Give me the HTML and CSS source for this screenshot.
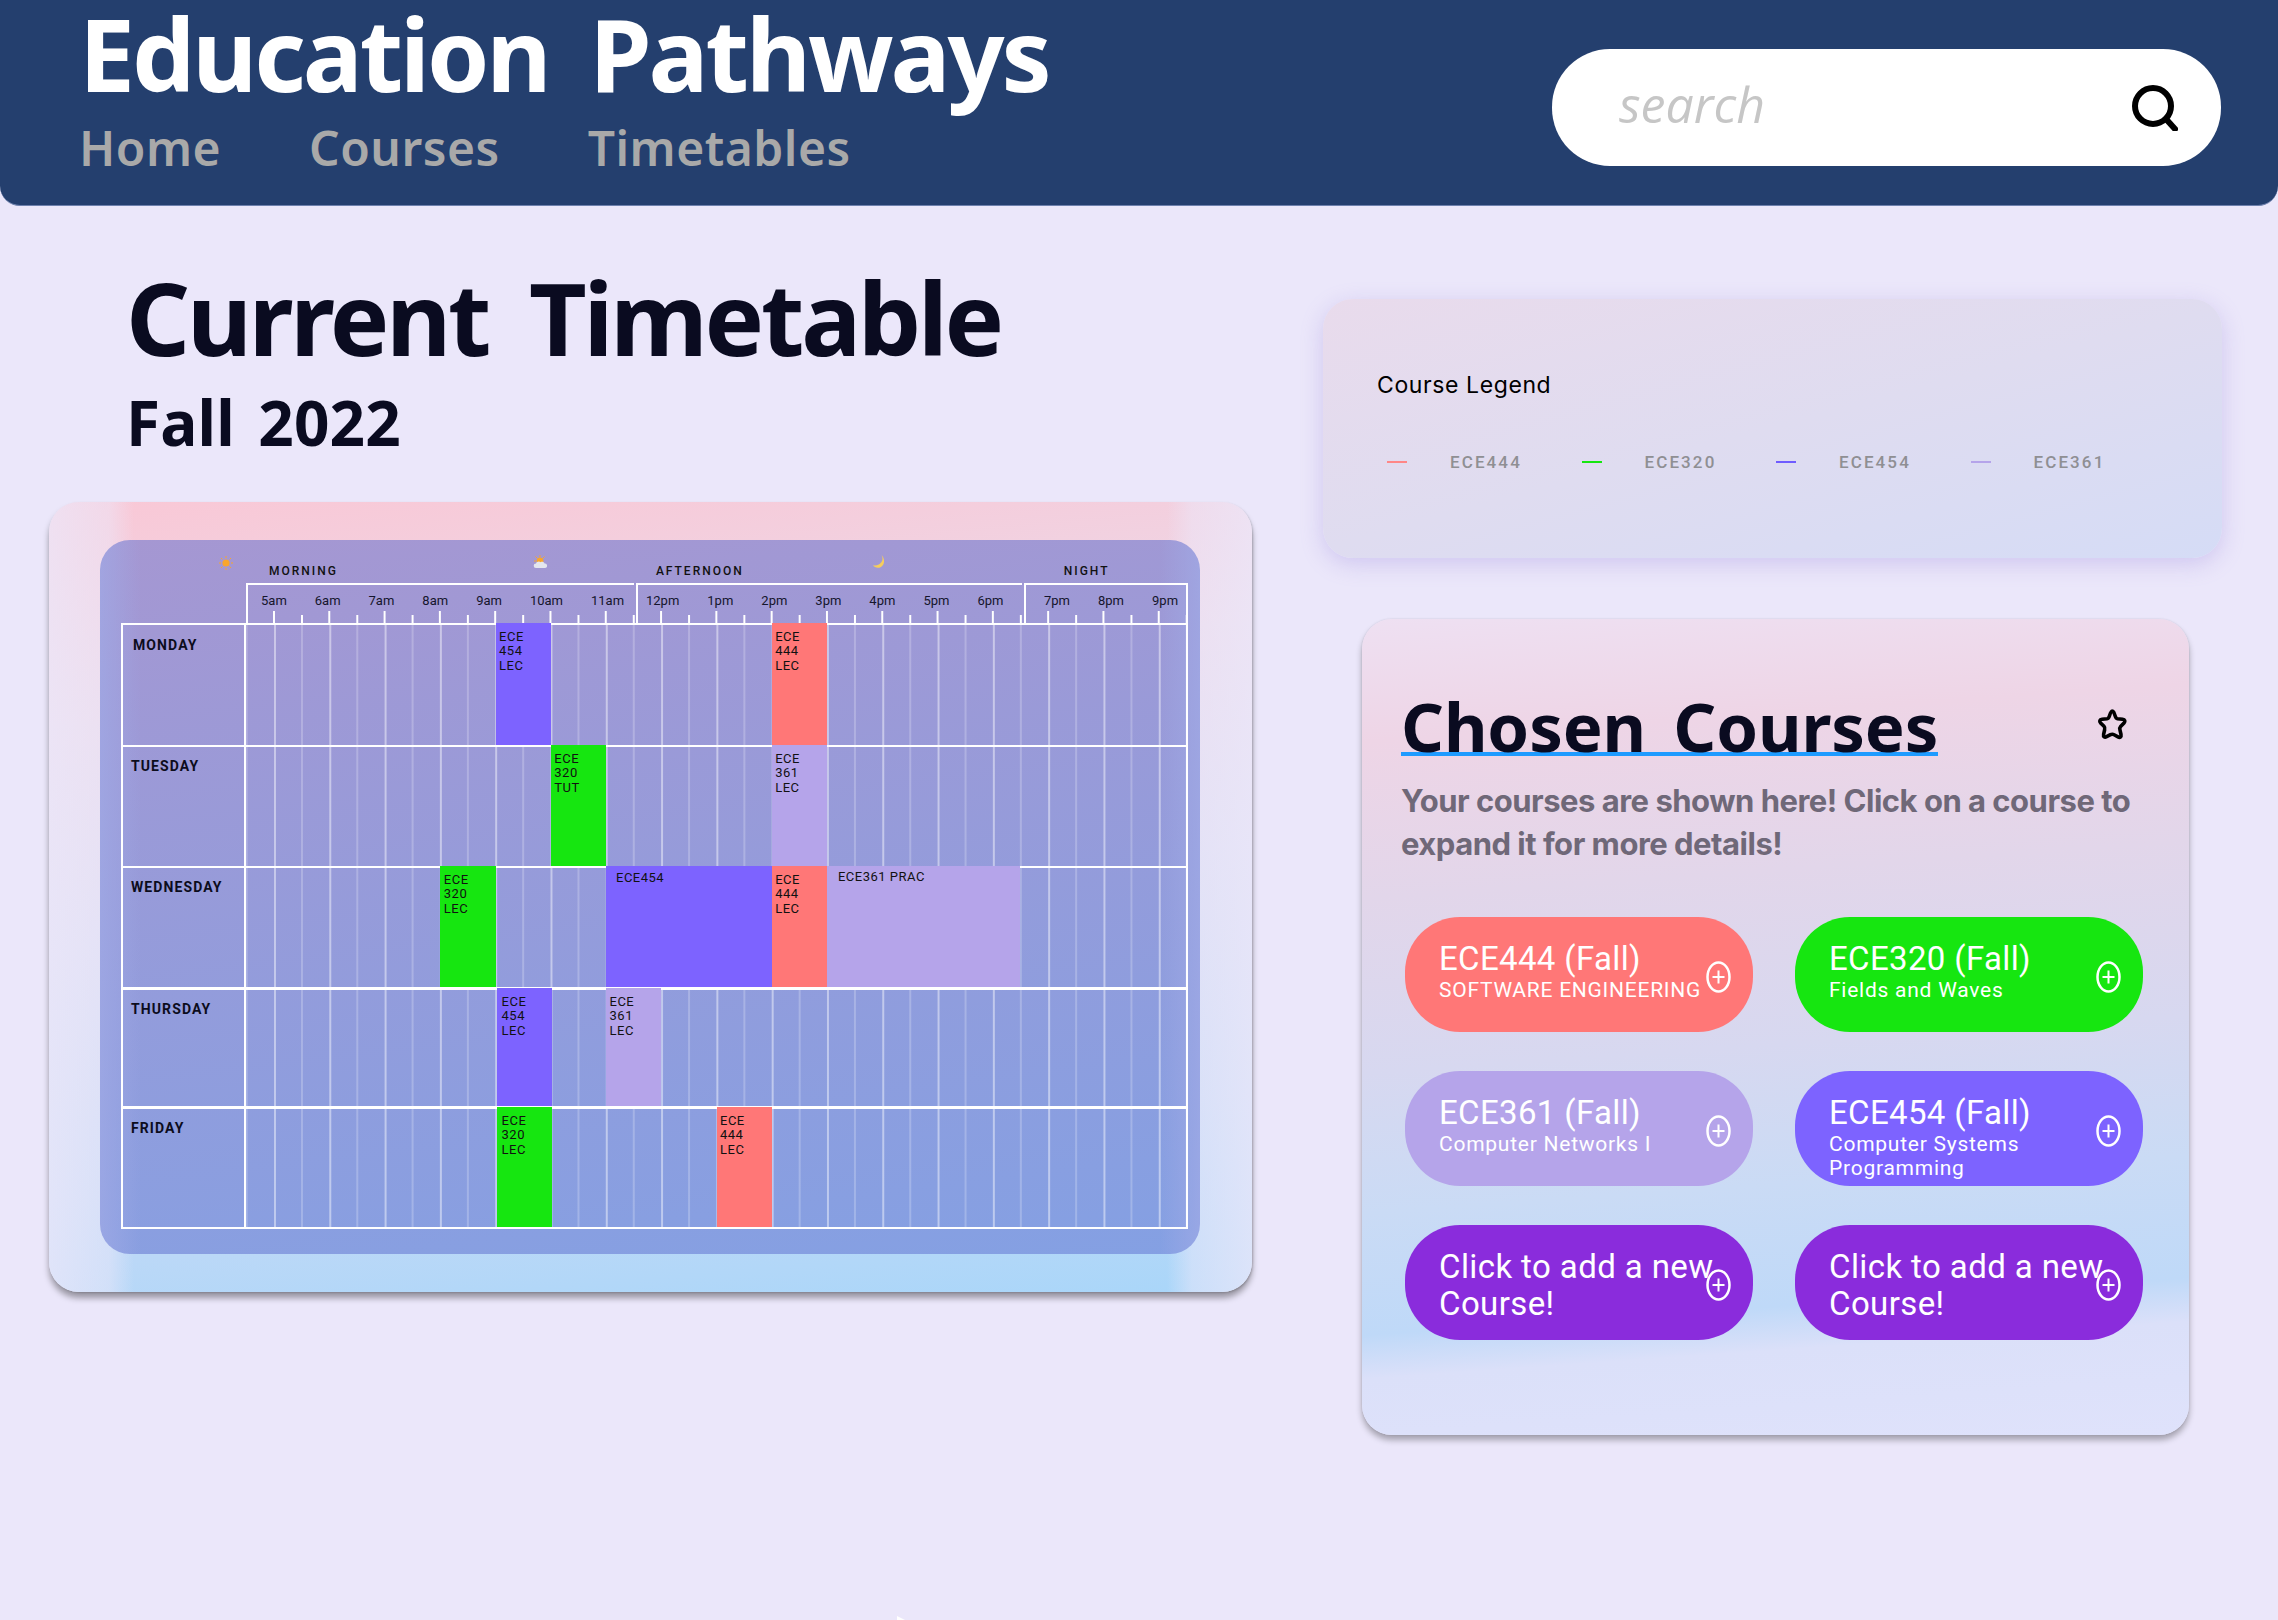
FILE: index.html
```html
<!DOCTYPE html>
<html lang="en">
<head>
  <meta charset="UTF-8">
  <title>Education Pathways</title>
  <link rel="stylesheet" href="styles.css">
</head>
<body>
  <header class="topbar">
    <div class="brand">
      <div class="app-name">Education Pathways</div>
      <nav class="nav">
        <a>Home</a>
        <a>Courses</a>
        <a>Timetables</a>
      </nav>
    </div>
    <div class="search">
      <span class="search-text">search</span>
      <svg class="search-icon" viewBox="0 0 46 46"><circle cx="21" cy="21" r="18" fill="none" stroke="#000" stroke-width="6"/><path d="M34 34l9 10" stroke="#000" stroke-width="6" stroke-linecap="round"/></svg>
    </div>
  </header>

  <main class="content">
    <section class="left">
      <h1 class="page-title">Current Timetable</h1>
      <h2 class="term">Fall 2022</h2>

      <div class="tt-card">
        <div class="tt-inner">
          <div class="periods">
            <svg class="p-icon sun" viewBox="0 0 14 14"><circle cx="7" cy="7" r="3.6" fill="#f9a62b"/><path d="M7 0v2M7 12v2M0 7h2M12 7h2M2 2l1.4 1.4M10.6 10.6L12 12M2 12l1.4-1.4M10.6 3.4L12 2" stroke="#f9a62b" stroke-width="1"/></svg>
            <span class="p-label morning">MORNING</span>
            <svg class="p-icon cloud" viewBox="0 0 16 14"><circle cx="7" cy="6" r="3.4" fill="#f9a62b"/><path d="M7 0v2M1 6h2M2.5 1.5l1.5 1.5M11.5 1.5L10 3" stroke="#f9a62b" stroke-width="1"/><path d="M3 13a2.3 2.3 0 0 1 0-4.6c.6-1.6 3-2.4 4.6-1.2 1.2-.8 3.6-.4 4 1.4a2.2 2.2 0 0 1 .6 4.4z" fill="#e4e6ee"/></svg>
            <span class="p-label afternoon">AFTERNOON</span>
            <svg class="p-icon moon" viewBox="0 0 14 14"><path d="M9.5 0c2.5 4 .5 10-6.500 10.500L1 10.300c1.500 2.700 7 4 10-.3 2-3 1-7.500-1.500-10z" fill="#f6cd5c"/></svg>
            <span class="p-label night">NIGHT</span>
          </div>

          <div class="hours-row">
            <div class="corner"></div>
            <div class="hours">
              <div class="hour-box am"><span>5am</span><span>6am</span><span>7am</span><span>8am</span><span>9am</span><span>10am</span><span>11am</span></div>
              <div class="hour-box pm"><span>12pm</span><span>1pm</span><span>2pm</span><span>3pm</span><span>4pm</span><span>5pm</span><span>6pm</span></div>
              <div class="hour-box eve"><span>7pm</span><span>8pm</span><span>9pm</span></div>
            </div>
          </div>

          <div class="week">
            <div class="day-row">
              <div class="day monday">MONDAY</div>
              <div class="slots">
                <div class="block c454 at-9">ECE<br>454<br>LEC</div>
                <div class="block c444 at-19">ECE<br>444<br>LEC</div>
              </div>
            </div>
            <div class="day-row">
              <div class="day">TUESDAY</div>
              <div class="slots">
                <div class="block c320 at-11">ECE<br>320<br>TUT</div>
                <div class="block c361 at-19">ECE<br>361<br>LEC</div>
              </div>
            </div>
            <div class="day-row">
              <div class="day">WEDNESDAY</div>
              <div class="slots">
                <div class="block c320 at-7">ECE<br>320<br>LEC</div>
                <div class="block c454 wide-a">ECE454</div>
                <div class="block c444 at-19">ECE<br>444<br>LEC</div>
                <div class="block c361 wide-b">ECE361 PRAC</div>
              </div>
            </div>
            <div class="day-row thick">
              <div class="day">THURSDAY</div>
              <div class="slots">
                <div class="block c454 at-9 nudge">ECE<br>454<br>LEC</div>
                <div class="block c361 at-13">ECE<br>361<br>LEC</div>
              </div>
            </div>
            <div class="day-row thick last">
              <div class="day">FRIDAY</div>
              <div class="slots">
                <div class="block c320 at-9 nudge">ECE<br>320<br>LEC</div>
                <div class="block c444 at-17">ECE<br>444<br>LEC</div>
              </div>
            </div>
          </div>
        </div>
      </div>
    </section>

    <aside class="right">
      <div class="legend-card">
        <div class="legend-title">Course Legend</div>
        <div class="legend-list">
          <div class="legend-item"><i class="swatch s444"></i>ECE444</div>
          <div class="legend-item"><i class="swatch s320"></i>ECE320</div>
          <div class="legend-item"><i class="swatch s454"></i>ECE454</div>
          <div class="legend-item"><i class="swatch s361"></i>ECE361</div>
        </div>
      </div>

      <div class="chosen-card">
        <div class="chosen-head">
          <h2 class="chosen-title">Chosen Courses</h2>
          <svg class="star" viewBox="0 0 32 32"><path d="M16 3c1.500 0 2 1.500 3 4.500.6 2 1.200 3 2.500 3.200l5 .6c2.500.4 3 2 1.500 3.700l-3.400 3.500c-1 1-1 2-.6 3.700l1 4.300c.5 2.500-1 3.500-3 2.400l-3.900-2.200c-1.300-.7-2.300-.7-3.600 0L10.600 28.700c-2 1.100-3.500.1-3-2.400l1-4.300c.4-1.700.4-2.700-.6-3.700L4.600 15c-1.500-1.700-1-3.300 1.500-3.700l5-.6c1.300-.2 1.900-1.200 2.500-3.200.9-3 1.400-4.500 2.900-4.500z" fill="none" stroke="#000" stroke-width="3.600"/></svg>
        </div>
        <p class="chosen-sub">Your courses are shown here! Click on a course to expand it for more details!</p>
        <div class="pills">
          <div class="pill c444">
            <div class="pill-name">ECE444 (Fall)</div>
            <div class="pill-sub">SOFTWARE ENGINEERING</div>
            <svg class="plus" viewBox="0 0 25 32"><ellipse cx="12.500" cy="16" rx="11" ry="14.500" fill="none" stroke="#fff" stroke-width="2.500"/><path d="M12.500 9.500v13M6.500 16h12" stroke="#fff" stroke-width="2"/></svg>
          </div>
          <div class="pill c320">
            <div class="pill-name">ECE320 (Fall)</div>
            <div class="pill-sub">Fields and Waves</div>
            <svg class="plus" viewBox="0 0 25 32"><ellipse cx="12.500" cy="16" rx="11" ry="14.500" fill="none" stroke="#fff" stroke-width="2.500"/><path d="M12.500 9.500v13M6.500 16h12" stroke="#fff" stroke-width="2"/></svg>
          </div>
          <div class="pill c361">
            <div class="pill-name">ECE361 (Fall)</div>
            <div class="pill-sub">Computer Networks I</div>
            <svg class="plus" viewBox="0 0 25 32"><ellipse cx="12.500" cy="16" rx="11" ry="14.500" fill="none" stroke="#fff" stroke-width="2.500"/><path d="M12.500 9.500v13M6.500 16h12" stroke="#fff" stroke-width="2"/></svg>
          </div>
          <div class="pill c454">
            <div class="pill-name">ECE454 (Fall)</div>
            <div class="pill-sub">Computer Systems<br>Programming</div>
            <svg class="plus" viewBox="0 0 25 32"><ellipse cx="12.500" cy="16" rx="11" ry="14.500" fill="none" stroke="#fff" stroke-width="2.500"/><path d="M12.500 9.500v13M6.500 16h12" stroke="#fff" stroke-width="2"/></svg>
          </div>
          <div class="pill add">
            <div class="pill-add">Click to add a new<br>Course!</div>
            <svg class="plus" viewBox="0 0 25 32"><ellipse cx="12.500" cy="16" rx="11" ry="14.500" fill="none" stroke="#fff" stroke-width="2.500"/><path d="M12.500 9.500v13M6.500 16h12" stroke="#fff" stroke-width="2"/></svg>
          </div>
          <div class="pill add">
            <div class="pill-add">Click to add a new<br>Course!</div>
            <svg class="plus" viewBox="0 0 25 32"><ellipse cx="12.500" cy="16" rx="11" ry="14.500" fill="none" stroke="#fff" stroke-width="2.500"/><path d="M12.500 9.500v13M6.500 16h12" stroke="#fff" stroke-width="2"/></svg>
          </div>
        </div>
      </div>
    </aside>
  </main>
  <svg class="cursor-tip" viewBox="0 0 8 4"><path d="M0 0l8 4H0z" fill="#fff"/></svg>
</body>
</html>
```

FILE: styles.css
```css
body {
  position: relative;
  margin: 0;
  height: 1620px;
  overflow: hidden;
  background: #ebe7fa;
  font-family: "Roboto", sans-serif;
}
h1, h2, p {
  margin: 0;
}
.cursor-tip {
  position: absolute;
  left: 897px;
  bottom: 0;
  width: 8px;
  height: 4px;
}

/* top bar */
.topbar {
  height: 206px;
  box-sizing: border-box;
  background: #243f6e;
  border-radius: 0 0 20px 20px;
  border-bottom: 1px solid #6d80ad;
  display: flex;
  justify-content: space-between;
  padding: 3px 57px 0 79px;
}
.app-name {
  font-family: "Noto Sans", sans-serif;
  font-size: 100px;
  font-weight: 700;
  line-height: 100px;
  letter-spacing: -3px;
  word-spacing: 18px;
  color: #fff;
}
.nav {
  display: flex;
  gap: 88px;
  margin-top: 17px;
}
.nav a {
  font-family: "Noto Sans", sans-serif;
  font-size: 48px;
  font-weight: 600;
  line-height: 56px;
  letter-spacing: 0.500px;
  color: #a9a9a9;
}
.search {
  width: 669px;
  height: 117px;
  margin-top: 46px;
  box-sizing: border-box;
  background: #fff;
  border-radius: 58px;
  display: flex;
  align-items: center;
  justify-content: space-between;
  padding: 0 43px 0 67px;
}
.search-text {
  font-family: "Open Sans", sans-serif;
  font-style: italic;
  font-size: 50px;
  color: #c6c6c6;
  margin-top: -8px;
}
.search-icon {
  width: 46px;
  height: 46px;
}

.content {
  display: flex;
}

/* left column */
.left {
  width: 1203px;
  margin-left: 49px;
}
.page-title {
  font-family: "Noto Sans", sans-serif;
  font-size: 100px;
  font-weight: 700;
  line-height: 100px;
  letter-spacing: -3.200px;
  word-spacing: 18px;
  color: #0a0b20;
  margin: 61px 0 0 77px;
}
.term {
  font-family: "Noto Sans", sans-serif;
  font-size: 62px;
  font-weight: 700;
  line-height: 70px;
  letter-spacing: 0.200px;
  word-spacing: 7px;
  color: #0a0b20;
  margin: 20px 0 0 77px;
}
.tt-card {
  margin-top: 45px;
  height: 790px;
  box-sizing: border-box;
  padding: 38px 52px 38px 51px;
  border-radius: 30px;
  background:
    linear-gradient(90deg, rgba(236, 232, 250, 0.75), rgba(236, 232, 250, 0.5) 60px, rgba(236, 232, 250, 0) 85px, rgba(236, 232, 250, 0) calc(100% - 85px), rgba(236, 232, 250, 0.5) calc(100% - 60px), rgba(236, 232, 250, 0.75)),
    linear-gradient(175deg, #f9c8d6 0%, #ecd8e8 25%, #dcdcf2 50%, #c4d9f6 78%, #a9d6f9 100%);
  box-shadow: 0 6px 6px rgba(0, 0, 0, 0.35), 1px 1px 2px rgba(0, 0, 0, 0.15);
}
.tt-inner {
  height: 100%;
  box-sizing: border-box;
  padding: 0 12px 0 21px;
  border-radius: 30px;
  background:
    linear-gradient(90deg, rgba(160, 170, 230, 0.7), rgba(160, 170, 230, 0) 40px, rgba(160, 170, 230, 0) calc(100% - 40px), rgba(160, 170, 230, 0.7)),
    linear-gradient(173deg, #a597d2, #84a0e3);
}
.periods {
  height: 43px;
  display: grid;
  grid-template-columns: 125px repeat(34, minmax(0, 1fr));
  align-items: start;
  justify-items: start;
}
.p-icon {
  grid-row: 1;
}
.sun {
  grid-column: 1;
  width: 14px;
  height: 14px;
  margin: 16px 0 0 98px;
}
.cloud {
  grid-column: 11;
  width: 16px;
  height: 14px;
  margin: 15px 0 0 38px;
}
.moon {
  grid-column: 23;
  width: 14px;
  height: 14px;
  margin: 15px 0 0 44px;
}
.p-label {
  grid-row: 1;
  margin-top: 24px;
  font-size: 12px;
  font-weight: 500;
  line-height: 14px;
  letter-spacing: 2px;
  white-space: nowrap;
  color: #111;
}
.morning {
  grid-column: 2;
  margin-left: 23px;
}
.afternoon {
  grid-column: 16;
  margin-left: 22px;
}
.night {
  grid-column: 30;
  margin-left: 42px;
}

.hours-row {
  display: grid;
  grid-template-columns: 125px 1fr;
  height: 40px;
}
.hours {
  display: flex;
  gap: 2px;
  background:
    linear-gradient(90deg, #fff 2px, transparent 2px) 27px 100% / 55.300px 12px repeat-x,
    linear-gradient(90deg, #fff 2px, transparent 2px) 55px 100% / 55.300px 8px repeat-x;
}
.hour-box {
  box-sizing: border-box;
  border-top: 2px solid #fff;
  border-left: 2px solid #fff;
  display: flex;
  gap: 28px;
  font-size: 13px;
  line-height: 15px;
  padding-top: 8px;
  color: #15152c;
}
.am {
  width: 388px;
  padding-left: 13px;
}
.pm {
  width: 386px;
  padding-left: 8px;
}
.eve {
  flex: 1;
  border-right: 2px solid #fff;
  padding-left: 18px;
}

.week {
  display: grid;
  grid-template-rows: 122px 121px 121px 119px 121px;
  border-bottom: 2px solid #fff;
}
.day-row {
  display: grid;
  grid-template-columns: 123px minmax(0, 1fr);
  border-top: 2px solid #fff;
  border-left: 2px solid #fff;
  border-right: 2px solid #fff;
}
.day-row.thick {
  border-top-width: 3px;
}
.day {
  font-size: 14px;
  font-weight: 700;
  line-height: 16px;
  letter-spacing: 1.100px;
  color: #0c0c1c;
  padding: 11px 0 0 8px;
  border-right: 2px solid #fff;
}
.day.monday {
  padding: 12px 0 0 10px;
}
.slots {
  display: grid;
  grid-template-columns: repeat(34, minmax(0, 1fr));
  padding-left: 1px;
  background:
    linear-gradient(90deg, rgba(255, 255, 255, 0.45) 2px, transparent 2px) 28px 0 / 55.300px 100% repeat-x,
    linear-gradient(90deg, rgba(255, 255, 255, 0.22) 2px, transparent 2px) 55px 0 / 55.300px 100% repeat-x;
}

/* timetable blocks */
.block {
  grid-row: 1;
  margin-top: -2px;
  padding: 7px 3px 0 3.500px;
  font-size: 13px;
  line-height: 14.300px;
  letter-spacing: 0.500px;
  color: #111;
  overflow: hidden;
  white-space: nowrap;
}
.at-7 { grid-column: 8 / span 2; }
.at-9 { grid-column: 10 / span 2; }
.at-11 { grid-column: 12 / span 2; }
.at-13 { grid-column: 14 / span 2; }
.at-17 { grid-column: 18 / span 2; }
.at-19 { grid-column: 20 / span 2; }
.wide-a { grid-column: 14 / span 6; padding-left: 10px; padding-top: 5px; }
.wide-b { grid-column: 22 / span 7; padding-left: 11px; padding-top: 4px; }
.nudge { transform: translateX(1px); padding-left: 5px; }

.c444 { background: #ff7777; }
.c320 { background: #16e610; }
.c361 { background: #b5a4ea; }
.c454 { background: #7d63ff; }
.add { background: #8a2cdc; }

/* right column */
.right {
  width: 899px;
  margin-left: 71px;
}
.legend-card {
  margin-top: 93px;
  height: 259px;
  box-sizing: border-box;
  padding: 70px 0 0 54px;
  border-radius: 30px;
  background: linear-gradient(165deg, #e9dbec, #dfdcf0 50%, #d5dcf6);
  box-shadow: 0 6px 22px rgba(150, 130, 220, 0.32);
}
.legend-title {
  font-family: "Inter", sans-serif;
  font-size: 23px;
  line-height: 32px;
  letter-spacing: 0.600px;
  color: #000;
}
.legend-list {
  display: flex;
  gap: 52.500px;
  margin-top: 51px;
  padding-left: 10px;
}
.legend-item {
  display: flex;
  align-items: center;
  gap: 43px;
  font-size: 17px;
  font-weight: 500;
  letter-spacing: 2.100px;
  color: #8f8f93;
  width: 142px;
}
.swatch {
  width: 20px;
  height: 2px;
  flex: none;
}
.s444 { background: #ff8787; }
.s320 { background: #16e610; }
.s454 { background: #6f5cff; }
.s361 { background: #b5a4ea; }

.chosen-card {
  margin: 61px 33px 0 39px;
  height: 816px;
  box-sizing: border-box;
  padding: 81px 47px 0 39px;
  border-radius: 30px;
  background: linear-gradient(176deg, #eee0f2 0%, #eed5e6 14%, #e2d6ea 32%, #d7d8f0 52%, #cadbf5 68%, #bfd9f8 82%, #dbe0f9 87%, #dfe2fb 100%);
  box-shadow: 0 5px 6px rgba(0, 0, 0, 0.3), 0 0 2px rgba(0, 0, 0, 0.12);
}
.chosen-head {
  display: flex;
  justify-content: space-between;
  align-items: flex-start;
}
.chosen-title {
  font-family: "Noto Sans", sans-serif;
  font-size: 67px;
  font-weight: 700;
  line-height: 52px;
  letter-spacing: -0.100px;
  word-spacing: 10px;
  color: #0a0b20;
  border-bottom: 4px solid #1e9bff;
}
.star {
  width: 32px;
  height: 32px;
  margin: 8px 14px 0 0;
}
.chosen-sub {
  font-family: "Inter", sans-serif;
  font-size: 31px;
  font-weight: 700;
  line-height: 43px;
  letter-spacing: -0.500px;
  color: #6f6878;
  margin-top: 23px;
}
.pills {
  display: grid;
  grid-template-columns: 348px 348px;
  grid-auto-rows: 115px;
  gap: 39px 42px;
  margin: 52px 0 0 4px;
}
.pill {
  position: relative;
  border-radius: 55px;
  box-sizing: border-box;
  padding: 23px 0 0 34px;
  color: #fff;
}
.pill-name {
  font-size: 33px;
  line-height: 38px;
  letter-spacing: 0.350px;
}
.pill-sub {
  font-size: 21px;
  line-height: 24px;
  letter-spacing: 0.750px;
}
.pill-add {
  font-size: 33px;
  line-height: 37px;
  letter-spacing: 0.400px;
}
.plus {
  position: absolute;
  right: 22px;
  top: 50%;
  width: 25px;
  height: 32px;
  margin-top: -14px;
}
```
